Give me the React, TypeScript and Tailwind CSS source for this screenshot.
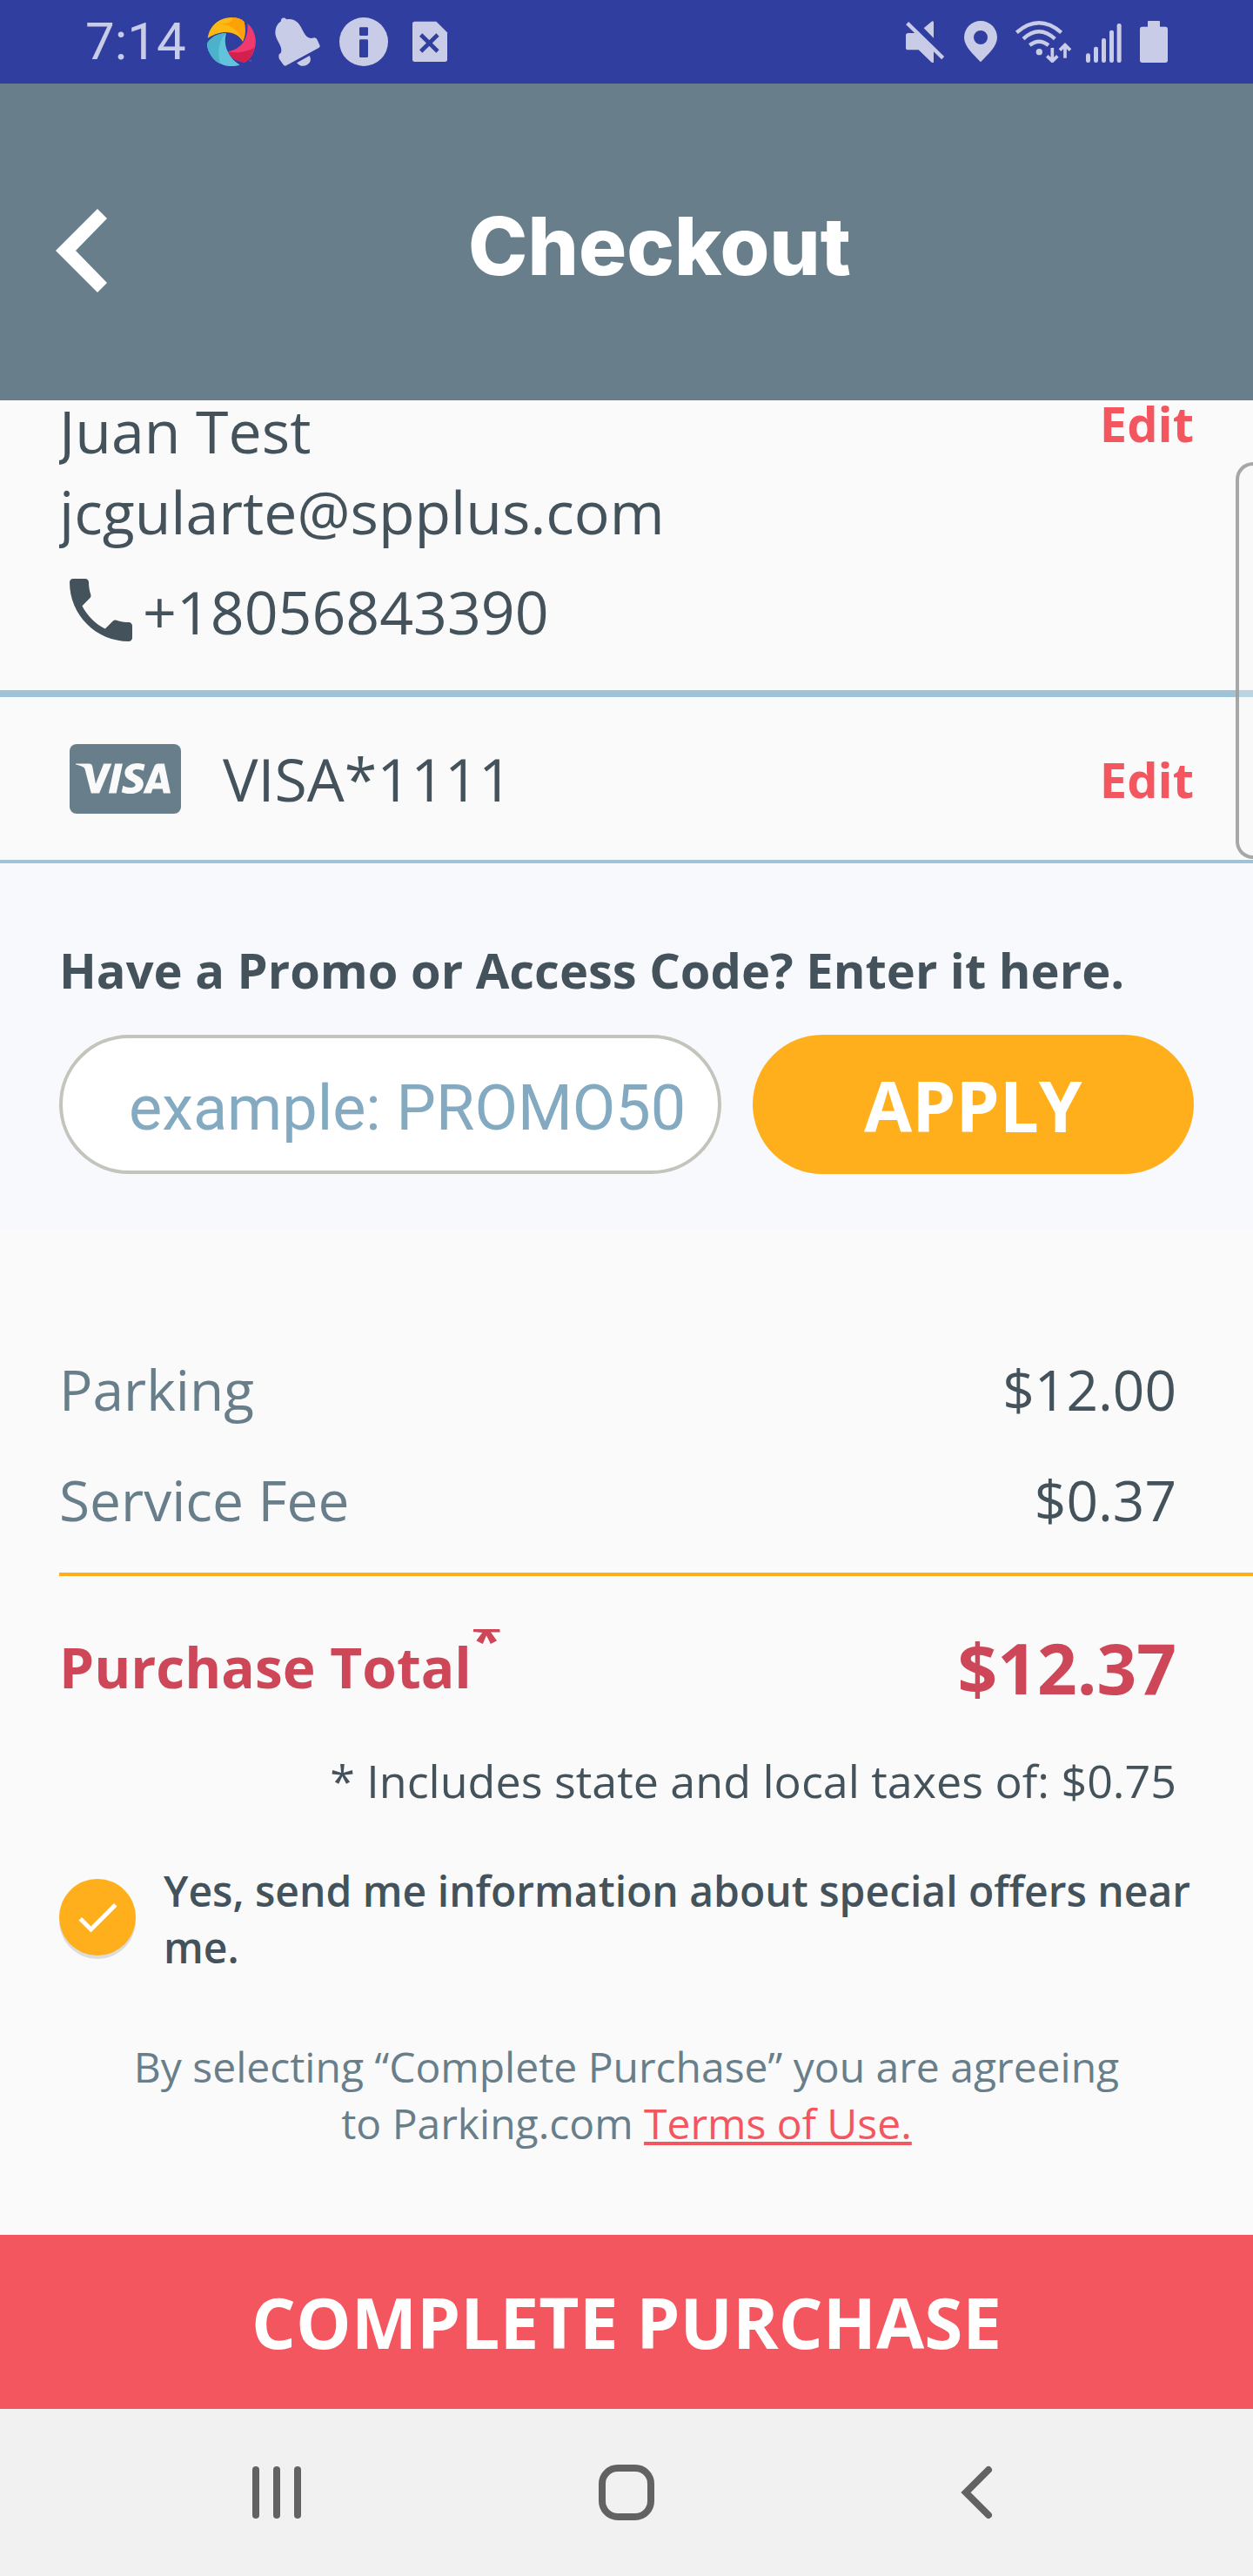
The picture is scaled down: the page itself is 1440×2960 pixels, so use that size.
import { useState } from "react";
import { MdCheck, MdPhone } from "react-icons/md";
import { SiVisa } from "react-icons/si";

function PinwheelIcon() {
  return (
    <svg viewBox="441 33 168 168" className="size-14" aria-hidden="true">
      <path fill="#fdb913" d="M443 104C450 60 485 33 525 33C545 33 560 38 569 48C575 75 573 98 564 116C548 86 500 68 443 104Z" />
      <path fill="#fb9a06" d="M481 57C516 50 552 80 564 116C573 98 575 75 569 48C560 38 545 33 525 33C535 45 515 55 481 56Z" opacity="0.75" />
      <path fill="#ef3a70" d="M580 53C605 75 614 110 605 140C598 165 585 180 570 188C540 185 520 170 508 151C560 145 585 105 580 53Z" />
      <path fill="#d4204c" d="M508 151C520 170 540 185 570 188C585 180 599 162 604 137C580 152 540 157 508 151Z" />
      <path fill="#62c3dc" d="M441 122C455 100 480 86 507 88C494 130 516 175 554 197C520 208 480 198 460 170C446 152 441 140 441 122Z" />
      <path fill="#4bb2ca" d="M441 122C455 100 480 86 507 88C480 110 474 160 488 193C465 185 441 155 441 122Z" />
      <text x="584" y="193" fontSize="16" fill="#ef3a70" className="font-['Roboto',sans-serif]">™</text>
    </svg>
  );
}

function BellIcon() {
  return (
    <svg viewBox="669 33 168 168" className="size-14" fill="currentColor" aria-hidden="true">
      <path d="M696 46C693 33 711 31 714 40C740 34 757 50 765 67C773 84 783 105 799 105L812 103Q818 104 820 109L829 128Q832 134 826 138L714 199Q708 202 703 195L690 176Q687 171 689 160Q697 158 697 145C696 125 676 108 676 85Q676 60 696 46Z" />
      <path d="M750 190L794 165Q800 175 796 186Q786 203 765 200Q756 197 750 190Z" />
    </svg>
  );
}

function InfoIcon() {
  return (
    <svg viewBox="897 33 168 168" className="size-14" aria-hidden="true">
      <circle cx="981" cy="117" r="84" fill="currentColor" />
      <rect x="966" y="67" width="30" height="29" rx="4" fill="#303f9f" />
      <rect x="966" y="109" width="30" height="62" rx="4" fill="#303f9f" />
    </svg>
  );
}

function SimIcon() {
  return (
    <svg viewBox="1125 33 168 168" className="size-14" aria-hidden="true">
      <path fill="currentColor" d="M1157 47H1231L1269 85V178Q1269 186 1261 186H1157Q1149 186 1149 178V55Q1149 47 1157 47Z" />
      <path stroke="#303f9f" strokeWidth="14" d="M1178 93L1236 150M1236 93L1178 150" />
    </svg>
  );
}

function MuteIcon() {
  return (
    <svg viewBox="33 30 153 144" className="h-12 w-[51px]" fill="currentColor" aria-hidden="true">
      <path d="M41 72H68L129 134V174L122 173L77 130H41Q33 130 33 122V80Q33 72 41 72Z" />
      <path d="M95 55L122 32Q129 28 129 36V89Z" />
      <path d="M38 38L161 158" stroke="currentColor" strokeWidth="13" />
    </svg>
  );
}

function PinIcon() {
  return (
    <svg viewBox="234 30 129 144" className="h-12 w-[43px]" fill="currentColor" aria-hidden="true">
      <path fillRule="evenodd" d="M291 30A57 57 0 0 1 348 87C348 118 316 145 291 172C266 145 234 118 234 87A57 57 0 0 1 291 30ZM291 63A24 24 0 1 0 291 111A24 24 0 1 0 291 63Z" />
    </svg>
  );
}

function WifiIcon() {
  return (
    <svg viewBox="411 30 195 144" className="h-12 w-[65px]" fill="none" stroke="currentColor" strokeWidth="13" aria-hidden="true">
      <path d="M415 70Q492 4 569 70M438 92Q492 42 547 92M460 114Q492 88 525 114" />
      <path strokeWidth="11" d="M538 123V168M520 151L538 169L556 151M582 158V114M564 131L582 113L600 131" />
      <circle cx="493" cy="137" r="11" fill="currentColor" stroke="none" />
    </svg>
  );
}

function SignalIcon() {
  return (
    <svg viewBox="654 30 138 144" className="h-12 w-[46px]" fill="currentColor" aria-hidden="true">
      <rect x="654" y="142" width="15" height="32" rx="7" />
      <rect x="681" y="119" width="15" height="55" rx="7" />
      <rect x="708" y="90" width="15" height="84" rx="7" />
      <rect x="735" y="62" width="15" height="112" rx="7" />
      <rect x="761" y="39" width="15" height="135" rx="7" />
    </svg>
  );
}

function BatteryIcon() {
  return (
    <svg viewBox="840 30 96 144" className="h-12 w-8" fill="currentColor" aria-hidden="true">
      <rect x="867" y="30" width="42" height="30" rx="2" />
      <rect x="840" y="50" width="96" height="124" rx="8" />
    </svg>
  );
}

function StatusBar() {
  return (
    <div className="flex h-24 items-center justify-between bg-[#303f9f] px-[98px] text-[#c9cce7]">
      <div className="flex items-center gap-6">
        <span className="font-['Roboto',sans-serif] text-[60px] leading-[72px]">7:14</span>
        <div className="flex items-center gap-5">
          <PinwheelIcon />
          <BellIcon />
          <InfoIcon />
          <SimIcon />
        </div>
      </div>
      <div className="flex items-center gap-4">
        <MuteIcon />
        <PinIcon />
        <WifiIcon />
        <SignalIcon />
        <BatteryIcon />
      </div>
    </div>
  );
}

function EditButton({ label }: { label: string }) {
  return (
    <button type="button" aria-label={label} className="text-[56px] leading-[76px] font-bold text-[#f3565e]">
      Edit
    </button>
  );
}

const fees = [
  { name: "Parking", amount: "$12.00" },
  { name: "Service Fee", amount: "$0.37" },
];

export default function App() {
  const [offers, setOffers] = useState(true);

  return (
    <div className="flex min-h-screen flex-col bg-[#fafafa] font-['Open_Sans','Noto_Sans',sans-serif] text-[#43525b]">
      <StatusBar />

      <header className="flex items-center bg-[#687f8b] px-16 pt-[127px] pb-[107px] text-white">
        <button type="button" aria-label="Back" className="w-[76px]">
          <svg viewBox="0 0 59 96" className="h-24 w-[59px]" fill="currentColor" aria-hidden="true">
            <path d="M48 0L59 11L23 48L59 85L48 96L0 48Z" />
          </svg>
        </button>
        <h1 className="flex-1 pb-2.5 text-center font-['Inter',sans-serif] text-[92px] leading-[120px] font-extrabold">Checkout</h1>
      </header>

      <main className="relative flex-1">
        <aside
          aria-label="Edge panel handle"
          className="absolute top-[71px] right-0 h-[456px] w-5 rounded-l-[20px] border-4 border-r-0 border-[#9e9e9e]/90 bg-[#fafafa]/30"
        />

        <section className="-mt-3 flex items-start justify-between border-b-8 border-[#9fc4d8] px-[68px] pb-11 text-[68px] leading-[93px]">
          <div>
            <p className="overflow-hidden">Juan Test</p>
            <p className="overflow-hidden">jcgularte@spplus.com</p>
            <p className="mt-[19px] flex items-end">
              <MdPhone className="size-24" aria-hidden="true" />
              <span>+18056843390</span>
            </p>
          </div>
          <EditButton label="Edit contact details" />
        </section>

        <section className="flex items-center justify-between border-b-4 border-[#9fc4d8] py-[47px] pr-[68px] pl-20">
          <div className="flex items-center gap-12 text-[68px] leading-[93px]">
            <span className="flex h-20 w-32 items-center rounded-lg bg-[#687f8b] pl-[7px] text-[#fafafa]">
              <SiVisa className="size-[109px]" aria-hidden="true" />
            </span>
            <span>VISA*1111</span>
          </div>
          <EditButton label="Edit payment method" />
        </section>

        <form className="bg-[#f8f9fc] px-[68px] pt-[84px] pb-[63px]" onSubmit={(e) => e.preventDefault()}>
          <label htmlFor="promo" className="block text-[56px] leading-[76px] font-bold">
            Have a Promo or Access Code? Enter it here.
          </label>
          <div className="mt-[37px] grid grid-cols-[3fr_2fr] gap-9">
            <input
              id="promo"
              type="text"
              placeholder="example: PROMO50"
              className="h-40 w-full min-w-0 rounded-full border-4 border-[#c3c4bb] bg-white pt-2 pl-[76px] font-['Roboto',sans-serif] text-[72px] outline-none placeholder:text-[#83aac1]"
            />
            <button type="submit" className="h-40 rounded-full bg-[#ffaf1c] text-[80px] leading-[109px] font-bold text-white">
              APPLY
            </button>
          </div>
        </form>

        <dl className="pt-[141px] pl-[68px]">
          {fees.map((fee) => (
            <div key={fee.name} className="flex justify-between pr-[88px] pb-10 text-[64px] leading-[87px]">
              <dt className="text-[#687f8b]">{fee.name}</dt>
              <dd>{fee.amount}</dd>
            </div>
          ))}
          <div className="flex items-center justify-between border-t-4 border-[#ffaf1c] pt-[50px] pr-[88px] font-bold text-[#cd4759]">
            <dt className="overflow-hidden text-[64px] leading-[87px]">
              Purchase Total<sup className="text-[64px]">*</sup>
            </dt>
            <dd className="text-[80px] leading-[109px]">$12.37</dd>
          </div>
        </dl>
        <p className="mt-10 pr-[88px] text-right text-[52px] leading-[71px]">* Includes state and local taxes of: $0.75</p>

        <div className="mt-[59px] flex items-center gap-8 px-[68px]">
          <span className="relative shrink-0 pb-1">
            <input
              id="offers"
              type="checkbox"
              checked={offers}
              onChange={(e) => setOffers(e.target.checked)}
              className="block size-[88px] appearance-none rounded-full bg-[#d5d5d5] shadow-[0_4px_0_#dcdcdc] checked:bg-[#ffaf1c]"
            />
            {offers && <MdCheck className="pointer-events-none absolute top-3.5 left-3.5 size-[60px] text-white" aria-hidden="true" />}
          </span>
          <label htmlFor="offers" className="text-[48px] leading-[65px] font-semibold">
            Yes, send me information about special offers near me.
          </label>
        </div>

        <p className="mx-auto mt-[72px] max-w-[1180px] pb-24 text-center text-[48px] leading-[65px] text-[#687f8b]">
          By selecting “Complete Purchase” you are agreeing to Parking.com{" "}
          <a href="#terms" className="text-[#f3565e] underline">
            Terms of Use.
          </a>
        </p>
      </main>

      <button type="button" className="bg-[#f3565e] py-[45px] text-[80px] leading-[110px] font-bold text-white">
        COMPLETE PURCHASE
      </button>

      <nav aria-label="System" className="grid h-48 grid-cols-3 place-items-center bg-[#f1f1f1] px-[117px] text-[#626262]">
        <button type="button" aria-label="Recent apps">
          <svg viewBox="0 0 64 64" className="size-16" fill="currentColor" aria-hidden="true">
            <rect x="4" y="2" width="8" height="60" rx="4" />
            <rect x="28" y="2" width="8" height="60" rx="4" />
            <rect x="52" y="2" width="8" height="60" rx="4" />
          </svg>
        </button>
        <button type="button" aria-label="Home">
          <svg viewBox="0 0 64 64" className="size-16" fill="none" stroke="currentColor" strokeWidth="8" aria-hidden="true">
            <rect x="4" y="4" width="56" height="56" rx="18" />
          </svg>
        </button>
        <button type="button" aria-label="Back to previous app">
          <svg viewBox="0 0 64 64" className="size-16" fill="none" stroke="currentColor" strokeWidth="8" strokeLinecap="round" aria-hidden="true">
            <path d="M46 6L20 32L46 58" />
          </svg>
        </button>
      </nav>
    </div>
  );
}
